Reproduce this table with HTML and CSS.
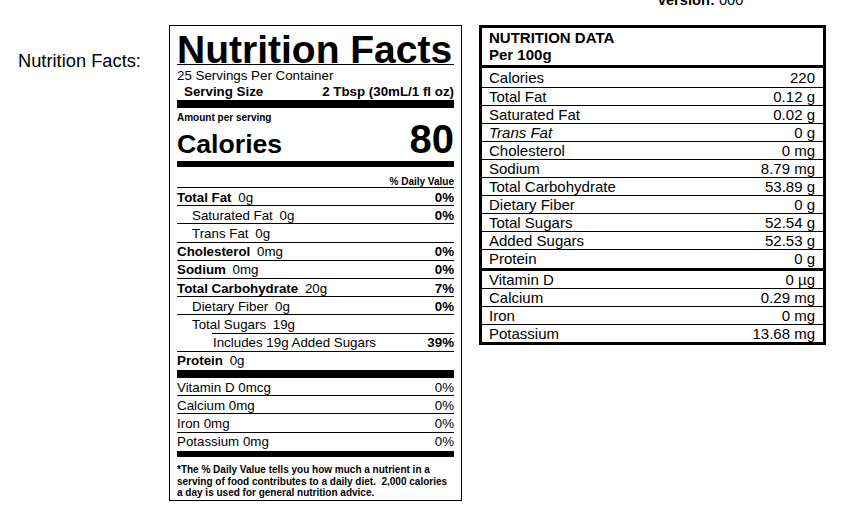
FILE: index.html
```html
<!DOCTYPE html>
<html lang="en">
<head>
<meta charset="utf-8">
<title>Nutrition Facts</title>
<link rel="stylesheet" href="styles.css">
</head>
<body>
<div class="page">
  <div class="version"><b>Version:</b> 000</div>

  <div class="side-label">Nutrition Facts:</div>

  <section class="label">
    <h1 class="nf-title">Nutrition Facts</h1>
    <div class="servings">25 Servings Per Container</div>
    <div class="serving-size"><span>Serving Size</span><span>2 Tbsp (30mL/1 fl oz)</span></div>
    <div class="amount">Amount per serving</div>
    <div class="calories"><span class="cal-label">Calories</span><span class="cal-value">80</span></div>
    <div class="dv-head">% Daily Value</div>

    <div class="nrow"><span><b>Total Fat</b> <span class="amt">0g</span></span><b>0%</b></div>
    <div class="nrow sub"><span>Saturated Fat <span class="amt">0g</span></span><b>0%</b></div>
    <div class="nrow sub"><span>Trans Fat <span class="amt">0g</span></span></div>
    <div class="nrow"><span><b>Cholesterol</b> <span class="amt">0mg</span></span><b>0%</b></div>
    <div class="nrow"><span><b>Sodium</b> <span class="amt">0mg</span></span><b>0%</b></div>
    <div class="nrow"><span><b>Total Carbohydrate</b> <span class="amt">20g</span></span><b>7%</b></div>
    <div class="nrow sub"><span>Dietary Fiber <span class="amt">0g</span></span><b>0%</b></div>
    <div class="nrow sub open"><span>Total Sugars <span class="amt">19g</span></span></div>
    <div class="added-row">
      <div class="added-inner"><span>Includes 19g Added Sugars</span><b>39%</b></div>
    </div>
    <div class="nrow protein"><span><b>Protein</b> <span class="amt">0g</span></span></div>

    <div class="nrow"><span>Vitamin D 0mcg</span><span>0%</span></div>
    <div class="nrow"><span>Calcium 0mg</span><span>0%</span></div>
    <div class="nrow"><span>Iron 0mg</span><span>0%</span></div>
    <div class="nrow vit-last"><span>Potassium 0mg</span><span>0%</span></div>

    <p class="footnote">*The % Daily Value tells you how much a nutrient in a<br>serving of food contributes to a daily diet.&nbsp; 2,000 calories<br>a day is used for general nutrition advice.</p>
  </section>

  <section class="data">
    <div class="data-head">NUTRITION DATA<br>Per 100g</div>
    <div class="drow first"><span>Calories</span><span>220</span></div>
    <div class="drow"><span>Total Fat</span><span>0.12 g</span></div>
    <div class="drow"><span>Saturated Fat</span><span>0.02 g</span></div>
    <div class="drow"><span><i>Trans Fat</i></span><span>0 g</span></div>
    <div class="drow"><span>Cholesterol</span><span>0 mg</span></div>
    <div class="drow"><span>Sodium</span><span>8.79 mg</span></div>
    <div class="drow"><span>Total Carbohydrate</span><span>53.89 g</span></div>
    <div class="drow"><span>Dietary Fiber</span><span>0 g</span></div>
    <div class="drow"><span>Total Sugars</span><span>52.54 g</span></div>
    <div class="drow"><span>Added Sugars</span><span>52.53 g</span></div>
    <div class="drow group-end"><span>Protein</span><span>0 g</span></div>
    <div class="drow"><span>Vitamin D</span><span>0 µg</span></div>
    <div class="drow"><span>Calcium</span><span>0.29 mg</span></div>
    <div class="drow"><span>Iron</span><span>0 mg</span></div>
    <div class="drow last"><span>Potassium</span><span>13.68 mg</span></div>
  </section>
</div>
</body>
</html>
```

FILE: styles.css
```css
html, body {
  margin: 0;
  padding: 0;
  background: #fff;
}

body {
  font-family: "Liberation Sans", Arial, sans-serif;
  color: #000;
  overflow: hidden;
}

.page {
  display: grid;
  grid-template-columns: 169px 293px 364px;
  grid-template-rows: 25px auto;
  align-items: start;
}

/* top-right version text, cut by the top edge */
.version {
  grid-row: 1;
  grid-column: 3;
  padding-left: 195px;
  margin-top: -8px;
  font-size: 14.67px;
  line-height: 17px;
  white-space: nowrap;
}

.side-label {
  grid-row: 2;
  grid-column: 1;
  padding: 24.5px 0 0 18px;
  font-size: 18.3px;
  line-height: 22px;
  white-space: nowrap;
}

/* ---------- FDA label ---------- */
.label {
  grid-row: 2;
  grid-column: 2;
  border: 1px solid #000;
  padding: 0 7px;
  font-size: 13.33px;
}

.nf-title {
  margin: 0;
  padding-top: 9px;
  font-size: 39px;
  font-weight: bold;
  line-height: 29px;
  border-bottom: 1px solid #000;
  white-space: nowrap;
}

.servings {
  padding-top: 3px;
  line-height: 16px;
}

.serving-size {
  display: flex;
  justify-content: space-between;
  padding: 0 0 0 7px;
  font-weight: bold;
  line-height: 16px;
  border-bottom: 8px solid #000;
}

.amount {
  padding-top: 4px;
  font-size: 10px;
  font-weight: bold;
  line-height: 12px;
}

.calories {
  display: flex;
  justify-content: space-between;
  align-items: baseline;
  height: 37px;
  border-bottom: 6px solid #000;
  font-weight: bold;
}

.cal-label {
  font-size: 26.67px;
  line-height: 30px;
}

.cal-value {
  font-size: 40px;
  line-height: 30px;
}

.dv-head {
  padding-top: 9px;
  text-align: right;
  font-size: 10px;
  font-weight: bold;
  line-height: 11px;
  border-bottom: 1px solid #000;
}

.nrow {
  display: flex;
  justify-content: space-between;
  padding-top: 2.5px;
  line-height: 14.7px;
  border-bottom: 1px solid #000;
  white-space: nowrap;
}

.nrow .amt {
  margin-left: 3px;
}

.nrow.sub {
  padding-left: 15px;
}

.nrow.open {
  border-bottom: none;
}

.added-row {
  border-bottom: 1px solid #000;
}

.added-inner {
  display: flex;
  justify-content: space-between;
  margin-left: 35px;
  padding: 2.5px 0 0 1px;
  line-height: 14.7px;
  border-top: 1px solid #000;
  white-space: nowrap;
}

.nrow.protein {
  padding-bottom: 1px;
  border-bottom: 8px solid #000;
}

.nrow.vit-last {
  padding-bottom: 1px;
  border-bottom: 6px solid #000;
}

.footnote {
  margin: 0;
  padding: 7px 0 1px;
  font-size: 10px;
  font-weight: bold;
  line-height: 11.7px;
  white-space: nowrap;
}

/* ---------- Per 100g table ---------- */
.data {
  grid-row: 2;
  grid-column: 3;
  margin-left: 17px;
  border: 3px solid #000;
  font-size: 15px;
}

.data-head {
  padding: 0.7px 8px 1.15px 7px;
  font-weight: bold;
  line-height: 17.6px;
  border-bottom: 3px solid #000;
}

.drow {
  display: flex;
  justify-content: space-between;
  padding: 0 8px 0 7px;
  line-height: 17.1px;
  border-bottom: 1px solid #000;
  white-space: nowrap;
}

.drow.first {
  padding-top: 1px;
  padding-bottom: 0.5px;
}

.drow.group-end {
  border-bottom-width: 3px;
}

.drow.last {
  border-bottom: none;
}
```
